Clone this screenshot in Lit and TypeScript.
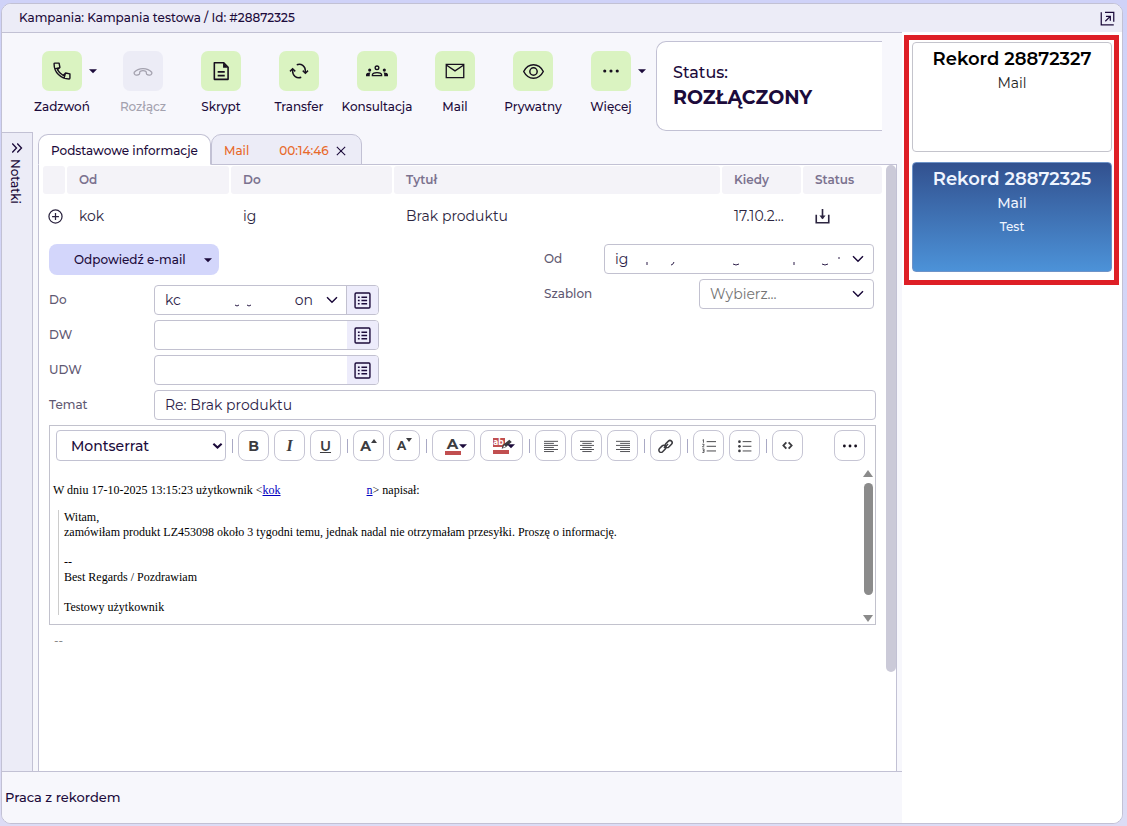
import { LitElement, html, svg, css, nothing, TemplateResult } from "lit";
import { customElement, property, state } from "lit/decorators.js";
import { classMap } from "lit/directives/class-map.js";

const ICONS: Record<string, TemplateResult> = {
  call: svg`<path d="M3.500 2.500h5l1 5.200-3 2.700c1.600 3 3.900 5.300 7 7l2.800-3 5.200 1v5c0 .6-.4 1.100-1 1.100C10.500 21.500 2.500 13.500 2.500 3.500c0-.5.4-1 1-1zM3.500 9.500l5.500-1.500M14.500 20.500l1.500-5.500" fill="none" stroke="currentColor" stroke-width="1.700" stroke-linejoin="round"/>`,
  hangup: svg`<g fill="none" stroke="currentColor" stroke-width="1.5"><path d="M1.500 13.500c5-6 16-6 21 0 .6 1-.3 3-1.500 3.300-1.400.4-3.600 0-4.500-.9-.9-1-.2-2.900-1-3.400-2-1-5-1-7 0-.8.500-.1 2.400-1 3.400-.9.900-3.100 1.300-4.500.9-1.200-.3-2.100-2.300-1.500-3.300z"/></g>`,
  script: svg`<g fill="none" stroke="currentColor" stroke-width="1.900"><path d="M4 2h11l5.500 5.500V22H4z" stroke-linejoin="round"/><path d="M8 13h8.500M8 17.500h8.500"/></g><path d="M14.500 2v6h6z" fill="currentColor"/>`,
  transfer: svg`<g fill="none" stroke="currentColor" stroke-width="1.900"><path d="M9 3.700C15 1.500 20.500 5.500 20.500 12v2.500M15 20.300C9 22.500 3.500 18.500 3.500 12V9.500"/><path d="M17 11.500l3.500 3.500 3.500-3.500M0 12.500L3.500 9 7 12.500"/></g>`,
  groups: svg`<g fill="none" stroke="currentColor" stroke-width="1.500"><circle cx="12" cy="8.500" r="2"/><path d="M7 17v-.8c0-3.300 10-3.300 10 0v.8z"/></g><g fill="currentColor"><circle cx="4" cy="11" r="1.700"/><circle cx="20" cy="11" r="1.700"/><path d="M0 17.800v-1.600c0-1.700 2.300-2.700 5-2.500-.7.700-.9 1.500-.9 2.500v1.600zM24 17.800v-1.600c0-1.700-2.300-2.700-5-2.500.7.700.9 1.500.9 2.500v1.600z"/></g>`,
  mail: svg`<g fill="none" stroke="currentColor" stroke-width="1.600"><path d="M1.500 4h21v16h-21zM1.500 4.800l10.500 7 10.500-7"/></g>`,
  eye: svg`<g fill="none" stroke="currentColor" stroke-width="1.700"><path d="M.8 12C3.500 6.800 7.500 4.300 12 4.300S20.500 6.800 23.200 12c-2.700 5.200-6.700 7.700-11.200 7.700S3.500 17.200.8 12z"/><circle cx="12" cy="12" r="4.200"/></g>`,
  dots: svg`<g fill="currentColor"><circle cx="4.500" cy="12" r="1.900"/><circle cx="12" cy="12" r="1.900"/><circle cx="19.500" cy="12" r="1.900"/></g>`,
  popout: svg`<g fill="none" stroke="currentColor" stroke-width="2"><path d="M2 2v20h20M8 2h14V17"/><path d="M8.500 16.500L16 9M9.500 8.500H16.500V15.500"/></g>`,
  close: svg`<path d="M2 2l20 20M22 2L2 22" fill="none" stroke="currentColor" stroke-width="2.600"/>`,
  double: svg`<path d="M2.500 3l8.500 9-8.500 9M12.500 3l8.500 9-8.500 9" fill="none" stroke="currentColor" stroke-width="2.700"/>`,
  plus: svg`<g fill="none" stroke="currentColor" stroke-width="2"><circle cx="12" cy="12" r="10.500"/><path d="M12 6.500v11M6.500 12h11"/></g>`,
  download: svg`<g fill="none" stroke="currentColor" stroke-width="2.600"><path d="M2 9v13h20V9M12 0v15"/></g><path d="M7 10.500h10L12 16.500z" fill="currentColor"/>`,
  chevron: svg`<path d="M2 6.500l10 10 10-10" fill="none" stroke="currentColor" stroke-width="3"/>`,
  boldChevron: svg`<path d="M3 8l9 8.500L21 8" fill="none" stroke="currentColor" stroke-width="4.500"/>`,
  list: svg`<g fill="none" stroke="currentColor" stroke-width="2"><rect x="1.500" y="1.500" width="21" height="21" rx="1.500"/><path d="M5.500 7.500h2.500M5.500 12h2.500M5.500 16.500h2.500M10.500 7.500h8M10.500 12h8M10.500 16.500h8"/></g>`,
  caret: svg`<path d="M0 6.500h24L12 18.500z" fill="currentColor"/>`,
  left: svg`<path d="M0 4h24M0 7.500h17M0 11h24M0 14.500h17M0 18h24M0 21.500h17" stroke="currentColor" stroke-width="1.500"/>`,
  center: svg`<path d="M0 4h24M4 7.500h16M0 11h24M4 14.500h16M0 18h24M4 21.500h16" stroke="currentColor" stroke-width="1.500"/>`,
  right: svg`<path d="M0 4h24M7 7.500h17M0 11h24M7 14.500h17M0 18h24M7 21.500h17" stroke="currentColor" stroke-width="1.500"/>`,
  link: svg`<g fill="none" stroke="currentColor" stroke-width="2.600"><rect x="-1" y="8.500" width="14" height="7.500" rx="3.750" transform="rotate(-45 6 12) translate(-3.500 3)"/><rect x="10" y="8.500" width="14" height="7.500" rx="3.750" transform="rotate(-45 17 12) translate(2 -3)"/><path d="M8.500 15.500l7-7"/></g>`,
  ordered: svg`<g fill="none" stroke="currentColor" stroke-width="1.600"><path d="M8 4.500h16M8 12.500h16M8 20.500h16"/><path d="M1 2l1.500-1v5.500M.5 9h3v1.500L.8 13.500h3M.5 17h3v6h-3M1.500 20h2" stroke-width="1.400"/></g>`,
  unordered: svg`<path d="M8 4.500h15M8 12.500h15M8 20.500h15" stroke="currentColor" stroke-width="1.600"/><g fill="currentColor"><circle cx="2.500" cy="4.500" r="2.300"/><circle cx="2.500" cy="12.500" r="2.300"/><circle cx="2.500" cy="20.500" r="2.300"/></g>`,
  code: svg`<path d="M9.500 5L3 12l6.500 7M14.500 5L21 12l-6.500 7" fill="none" stroke="currentColor" stroke-width="4"/>`,
  marker: svg`<path d="M19 3l4.500 4.500L12.500 17l-7.500 3 2-7z" fill="currentColor"/><path d="M9.500 13.500l3 2.500-5 2z" fill="#fff"/>`,
};

const icon = (name: string, size = 16) =>
  html`<svg width=${size} height=${size} viewBox="0 0 24 24" aria-hidden="true">${ICONS[name]}</svg>`;

const base = css`
  :host { box-sizing: border-box; }
  *, *::before, *::after { box-sizing: border-box; }
  svg { display: block; flex: none; overflow: visible; }
  button, input, select { font: inherit; color: inherit; margin: 0; }
  button { display: inline-flex; align-items: center; justify-content: center; padding: 0; border: 0; background: none; cursor: pointer; }
`;

@customElement("call-action")
class CallAction extends LitElement {
  @property() label = "";
  @property() icon = "";
  @property({ type: Number }) size = 20;
  @property({ type: Boolean }) menu = false;
  @property({ type: Boolean }) disabled = false;

  static styles = [base, css`
    :host { display: block; width: 76px; flex: none; }
    .row { display: grid; grid-template-columns: 1fr 40px 1fr; align-items: center; }
    .tile { grid-column: 2; width: 40px; height: 40px; border-radius: 7px; background: #daf3c1; color: #17101f; }
    .more { justify-self: end; width: 14px; height: 24px; }
    .label { display: block; margin-top: 8px; text-align: center; font-size: 12px; line-height: 16px; font-weight: 500; white-space: nowrap; }
    .off { background: #ececf6; color: #a3a1ae; }
    .muted { color: #a3a1ae; }
  `];

  render() {
    return html`
      <div class="row">
        <button class=${classMap({ tile: true, off: this.disabled })} ?disabled=${this.disabled} aria-labelledby="label">
          ${icon(this.icon, this.size)}
        </button>
        ${this.menu ? html`<button class="more" aria-label="Menu">${icon("caret", 8)}</button>` : nothing}
      </div>
      <span id="label" class=${classMap({ label: true, muted: this.disabled })}>${this.label}</span>
    `;
  }
}

@customElement("record-card")
class RecordCard extends LitElement {
  @property() number = "";
  @property() kind = "";
  @property() note = "";
  @property({ type: Boolean, reflect: true }) active = false;

  static styles = [base, css`
    :host { display: block; height: 110px; padding: 4px 8px; border: 1px solid #c4c4cc; border-radius: 4px; background: #fff; color: #222; text-align: center; }
    :host([active]) { color: #eff5ff; border-color: #6d93c8; background: linear-gradient(#32518f, #4c92d8); }
    .name { margin: 0; font-size: 18px; line-height: 24px; font-weight: 600; color: #000; }
    .kind, .note { margin: 0; font-size: 14px; line-height: 24px; }
    .note { font-size: 12px; }
    .kind { font-weight: 400; }
    :host([active]) .name { color: inherit; }
    :host([active]) .kind, :host([active]) .note { font-weight: 500; }
  `];

  render() {
    return html`
      <h2 class="name">Rekord ${this.number}</h2>
      <p class="kind">${this.kind}</p>
      ${this.note ? html`<p class="note">${this.note}</p>` : nothing}
    `;
  }
}

@customElement("mail-editor")
class MailEditor extends LitElement {
  static styles = [base, css`
    :host { display: block; border: 1px solid #c2c2cd; background: #fff; }
    .tools { display: flex; align-items: center; gap: 5px; padding: 4px 10px 4px 6px; }
    .family { position: relative; width: 170px; color: #1c0b3b; }
    .family select { width: 100%; height: 31px; padding: 0 24px 0 14px; border: 1px solid #c2c2d2; border-radius: 4px; background: #fff; appearance: none; font-size: 14px; font-weight: 500; }
    .family svg { position: absolute; right: 3px; top: 10px; pointer-events: none; }
    .sep { width: 2px; height: 14px; border-right: 1px solid #a9a9c4; }
    .tool { width: 31px; height: 31px; border: 1px solid #c6c5d4; border-radius: 8px; background: #fff; color: #3c3c40; font-size: 14px; font-weight: 700; }
    .wide { width: 43px; padding-left: 4px; }
    .italic { font-family: "Liberation Serif", serif; font-style: italic; font-size: 16px; }
    .under { text-decoration: underline; font-weight: 600; }
    .size { display: flex; align-items: flex-start; }
    .small { font-size: 12px; }
    .swatch { display: grid; justify-items: center; width: 16px; border-bottom: 4px solid #c14f50; font-size: 15px; line-height: 14px; }
    .pen { display: flex; align-items: flex-start; justify-self: start; height: 12px; }
    .mark { width: 12px; background: #c14f50; color: #fff; font-size: 8px; line-height: 9px; text-align: center; }
    .pen svg { margin-left: -6px; }
    .drop { color: #1c0b3b; margin-left: -2px; }
    .push { margin-left: auto; color: #17101f; }
    .view { display: flex; height: 159px; padding-left: 3px; font: 12px/15px "Liberation Serif", serif; color: #000; }
    .text { flex: 1; min-width: 0; padding-top: 18px; }
    .intro { margin: 0 0 12px; }
    .intro a { color: #0000c0; }
    .hidden { display: inline-block; width: 86px; }
    blockquote { margin: 0 0 0 5px; padding-left: 5px; border-left: 1px solid #ccc; }
    blockquote p { margin: 0; min-height: 15px; }
    .bar { display: flex; flex-direction: column; align-items: center; width: 13px; padding: 5px 1px 2px 0; gap: 5px; color: #8b8b8b; }
    .thumb { width: 9px; height: 112px; border-radius: 5px; background: #8b8b8b; margin-bottom: auto; }
  `];

  private tool(label: string, content: unknown, cls = "") {
    return html`<button type="button" class="tool ${cls}" aria-label=${label}>${content}</button>`;
  }

  render() {
    const sep = html`<span class="sep"></span>`;
    return html`
      <div class="tools" role="toolbar">
        <span class="family">
          <select aria-label="Czcionka"><option>Montserrat</option></select>${icon("boldChevron", 11)}
        </span>
        ${sep}
        ${this.tool("Pogrubienie", "B")}
        ${this.tool("Kursywa", "I", "italic")}
        ${this.tool("Podkreślenie", "U", "under")}
        ${sep}
        ${this.tool("Większa", html`<span class="size">A<svg width="6" height="6" viewBox="0 0 6 6"><path d="M0 5l3-4 3 4z" fill="currentColor"/></svg></span>`)}
        ${this.tool("Mniejsza", html`<span class="size small">A<svg width="6" height="6" viewBox="0 0 6 6"><path d="M0 0l3 4 3-4z" fill="currentColor"/></svg></span>`)}
        ${sep}
        ${this.tool("Kolor tekstu", html`<span class="swatch">A</span><span class="drop">${icon("caret", 8)}</span>`, "wide")}
        ${this.tool("Kolor tła", html`<span class="swatch"><span class="pen"><span class="mark">ab</span>${icon("marker", 13)}</span></span><span class="drop">${icon("caret", 8)}</span>`, "wide")}
        ${sep}
        ${this.tool("Do lewej", icon("left", 14))}
        ${this.tool("Wyśrodkuj", icon("center", 14))}
        ${this.tool("Do prawej", icon("right", 14))}
        ${sep}
        ${this.tool("Odnośnik", icon("link", 14))}
        ${sep}
        ${this.tool("Lista numerowana", icon("ordered", 14))}
        ${this.tool("Lista punktowana", icon("unordered", 14))}
        ${sep}
        ${this.tool("Kod", icon("code", 11))}
        ${this.tool("Więcej", icon("dots", 18), "push")}
      </div>
      <div class="view">
        <div class="text">
          <p class="intro">W dniu 17-10-2025 13:15:23 użytkownik &lt;<a href="#">kok</a><span class="hidden"></span><a href="#">n</a>&gt; napisał:</p>
          <blockquote>
            <p>Witam,</p>
            <p>zamówiłam produkt LZ453098 około 3 tygodni temu, jednak nadal nie otrzymałam przesyłki. Proszę o informację.</p>
            <p></p>
            <p>--</p>
            <p>Best Regards / Pozdrawiam</p>
            <p></p>
            <p>Testowy użytkownik</p>
          </blockquote>
        </div>
        <div class="bar">
          <svg width="10" height="8" viewBox="0 0 10 8"><path d="M0 7h10L5 0z" fill="currentColor"/></svg>
          <span class="thumb"></span>
          <svg width="10" height="8" viewBox="0 0 10 8"><path d="M0 1h10L5 8z" fill="currentColor"/></svg>
        </div>
      </div>
    `;
  }
}

@customElement("app-root")
class AppRoot extends LitElement {
  @state() private records = [
    { number: "28872327", kind: "Mail", note: "", active: false },
    { number: "28872325", kind: "Mail", note: "Test", active: true },
  ];

  static styles = [base, css`
    :host { display: flex; min-height: 100vh; padding: 3px 4px 2px 1px; background: linear-gradient(#cfd2f8, #dcdcf5); font: 500 12px/16px Montserrat, Inter, "Noto Sans", sans-serif; color: #1c0b3b; }
    .window { flex: 1; min-width: 0; display: flex; flex-direction: column; border: 1px solid #c2c1d4; border-radius: 10px; background: #fff; overflow: hidden; }
    .title { display: flex; align-items: center; justify-content: space-between; height: 28px; padding: 0 7px 0 17px; background: #ececf7; }
    .title h1 { margin: 0; font: inherit; }
    .body { flex: 1; display: grid; grid-template-columns: minmax(0, 1fr) 220px; }
    .main { display: flex; flex-direction: column; min-width: 0; background: #f7f7fc; border-top: 1px solid #c2c1d4; }
    .actions { display: flex; height: 99px; padding: 8px 20px 0 22px; }
    .buttons { display: flex; gap: 2px; padding-top: 10px; }
    .buttons > :first-child { margin-right: 3px; }
    .status { flex: 1; min-width: 0; margin-left: 7px; padding: 20px 16px; height: 90px; border: 1px solid #c2c1d4; border-right: 0; border-radius: 10px 0 0 10px; background: #fff; font-size: 16px; line-height: 22px; }
    .status strong { display: block; font-size: 19px; line-height: 28px; font-weight: 700; }
    .work { flex: 1; display: grid; grid-template-columns: 31px minmax(0, 1fr); column-gap: 5px; padding-right: 5px; }
    .notes { display: flex; flex-direction: column; align-items: center; gap: 5px; padding-top: 9px; border: 1px solid #c2c1d4; border-left: 0; border-bottom: 0; background: #ececf7; }
    .notes span { writing-mode: vertical-rl; margin-right: 4px; }
    .pane { display: flex; flex-direction: column; padding-top: 2px; }
    .tabs { display: flex; height: 31px; border-bottom: 1px solid #c2c1d4; }
    .tab { height: 31px; padding: 2px 12px 0; border: 1px solid #c2c1d4; border-radius: 10px 10px 0 0; background: #ececf7; }
    .tab.open { background: #fff; border-bottom-color: #fff; }
    .tab.mail { gap: 6px; color: #e8692a; }
    .tab.mail .time { margin-left: 24px; }
    .tab.mail svg { color: #1c0b3b; margin: 0 3px 0 1px; }
    .content { flex: 1; display: flex; border: 1px solid #c2c1d4; border-top: 0; border-bottom: 0; background: #fff; }
    .scroll { width: 11px; display: flex; justify-content: center; margin-left: 1px; }
    .handle { width: 10px; height: 507px; border-radius: 5px; background: #cbcad8; }
    .inner { flex: 1; min-width: 0; }
    table { width: 100%; padding-left: 2px; border-spacing: 2px 0; table-layout: fixed; margin-top: 1px; }
    th { height: 28px; padding: 0 12px; background: #f4f3f8; border-radius: 3px; text-align: left; font-weight: 600; color: #7b728f; }
    td { height: 44px; padding: 0 12px; font-size: 14px; font-weight: 400; color: #2c2540; white-space: nowrap; }
    td:first-child { padding: 0 0 0 5px; }
    td button { vertical-align: middle; }
    .c0 { width: 22px; } .c1 { width: 162px; } .c2 { width: 161px; } .c4 { width: 79px; } .c5 { width: 79px; }
    .mailform { padding: 6px 8px 0 10px; }
    .split { display: grid; grid-template-columns: 330px 330px; justify-content: space-between; padding-right: 2px; }
    .col { display: grid; gap: 5px; align-content: start; }
    .reply { width: 170px; height: 31px; margin-bottom: 5px; padding: 0 7px 0 25px; justify-content: space-between; border-radius: 8px; background: #d3d6fb; }
    .field { display: grid; grid-template-columns: 105px minmax(0, 1fr); align-items: center; }
    .right .field { grid-template-columns: 60px minmax(0, 1fr); }
    .right .field.template { grid-template-columns: 155px minmax(0, 1fr); }
    label { color: #5f5972; }
    .control { position: relative; display: flex; width: 100%; height: 30px; border: 1px solid #c2c1d0; border-radius: 4px; background: #fff; overflow: hidden; }
    .control input, .control select { flex: 1; min-width: 0; width: 100%; height: 100%; padding: 0 10px; border: 0; background: transparent; appearance: none; font-size: 14px; font-weight: 400; color: #2c1d48; }
    .control select.pending { color: #757575; }
    .control .arrow { position: absolute; right: 9px; top: 8px; pointer-events: none; }
    .control.book .arrow { right: 40px; }
    .control .trace { position: absolute; pointer-events: none; left: 10px; top: 16px; }
    .picker { width: 31px; height: 28px; background: #edecfb; }
    .book.lined .picker { width: 32px; border-left: 1px solid #c2c1d0; }
    .subject { margin: 5px 0; }
    .dashes { margin: 8px 0 0 5px; color: #666; font-weight: 400; }
    .footer { display: flex; align-items: center; height: 52px; padding: 0 3px 2px; border-top: 1px solid #c2c1d4; font-size: 13px; }
    .side { padding: 3px 3px 0 2px; background: #fff; }
    .frame { display: grid; gap: 10px; padding: 2px 2px 8px 3px; border: 5px solid #de1f26; }
  `];

  private book(id: string, label: string) {
    return html`
      <div class="field">
        <label for=${id}>${label}</label>
        <span class="control book"><input id=${id} type="text" /><button type="button" class="picker" aria-label="Książka adresowa">${icon("list", 17)}</button></span>
      </div>`;
  }

  render() {
    return html`
      <div class="window">
        <header class="title">
          <h1>Kampania: Kampania testowa / Id: #28872325</h1>
          <button aria-label="Otwórz w nowym oknie">${icon("popout", 15)}</button>
        </header>
        <div class="body">
          <main class="main">
            <div class="actions">
              <nav class="buttons">
                <call-action label="Zadzwoń" icon="call" menu></call-action>
                <call-action label="Rozłącz" icon="hangup" disabled></call-action>
                <call-action label="Skrypt" icon="script"></call-action>
                <call-action label="Transfer" icon="transfer" size="18"></call-action>
                <call-action label="Konsultacja" icon="groups" size="22"></call-action>
                <call-action label="Mail" icon="mail"></call-action>
                <call-action label="Prywatny" icon="eye" size="21"></call-action>
                <call-action label="Więcej" icon="dots" menu></call-action>
              </nav>
              <div class="status">Status:<strong>ROZŁĄCZONY</strong></div>
            </div>
            <div class="work">
              <aside class="notes">
                <button aria-label="Rozwiń">${icon("double", 12)}</button>
                <span>Notatki</span>
              </aside>
              <section class="pane">
                <div class="tabs">
                  <button class="tab open">Podstawowe informacje</button>
                  <button class="tab mail"><span>Mail</span><span class="time">00:14:46</span>${icon("close", 10)}</button>
                </div>
                <div class="content">
                  <div class="inner">
                    <table>
                      <colgroup><col class="c0" /><col class="c1" /><col class="c2" /><col /><col class="c4" /><col class="c5" /></colgroup>
                      <thead><tr><th></th><th>Od</th><th>Do</th><th>Tytuł</th><th>Kiedy</th><th>Status</th></tr></thead>
                      <tbody><tr>
                        <td><button aria-label="Rozwiń">${icon("plus", 15)}</button></td>
                        <td>kok</td>
                        <td>ig</td>
                        <td>Brak produktu</td>
                        <td>17.10.2...</td>
                        <td><button aria-label="Pobierz">${icon("download", 15)}</button></td>
                      </tr></tbody>
                    </table>
                    <form class="mailform" @submit=${(e: Event) => e.preventDefault()}>
                      <div class="split">
                        <div class="col">
                          <button type="button" class="reply">Odpowiedź e-mail${icon("caret", 8)}</button>
                          <div class="field">
                            <label for="to">Do</label>
                            <span class="control book lined">
                              <select id="to"><option>kc${"\u00a0".repeat(31)}on</option></select>
                              <span class="arrow">${icon("chevron", 12)}</span>
                              <svg class="trace" width="140" height="6" viewBox="0 0 140 6"><path d="M70 3q2 2 4 0M82 3q2 2 4 0" fill="none" stroke="#2c1d48"/></svg>
                              <button type="button" class="picker" aria-label="Książka adresowa">${icon("list", 17)}</button>
                            </span>
                          </div>
                          ${this.book("cc", "DW")}
                          ${this.book("bcc", "UDW")}
                        </div>
                        <div class="col right">
                          <div class="field">
                            <label for="from">Od</label>
                            <span class="control">
                              <select id="from"><option>ig</option></select>
                              <svg class="trace" width="226" height="6" viewBox="0 0 226 6"><path d="M32 1v3M56 4q2 0 3-3M118 3q3 2 6 0M179 1v3M207 3q3 2 6 0M224 -4v2" fill="none" stroke="#2c1d48"/></svg>
                              <span class="arrow">${icon("chevron", 12)}</span>
                            </span>
                          </div>
                          <div class="field template">
                            <label for="tpl">Szablon</label>
                            <span class="control">
                              <select id="tpl" class="pending"><option>Wybierz...</option></select>
                              <span class="arrow">${icon("chevron", 12)}</span>
                            </span>
                          </div>
                        </div>
                      </div>
                      <div class="field subject">
                        <label for="subject">Temat</label>
                        <span class="control"><input id="subject" type="text" .value=${"Re: Brak produktu"} /></span>
                      </div>
                      <mail-editor></mail-editor>
                      <p class="dashes">--</p>
                    </form>
                  </div>
                  <div class="scroll"><span class="handle"></span></div>
                </div>
              </section>
            </div>
            <footer class="footer">Praca z rekordem</footer>
          </main>
          <aside class="side">
            <div class="frame">
              ${this.records.map((r) => html`<record-card .number=${r.number} .kind=${r.kind} .note=${r.note} ?active=${r.active}></record-card>`)}
            </div>
          </aside>
        </div>
      </div>
    `;
  }
}
